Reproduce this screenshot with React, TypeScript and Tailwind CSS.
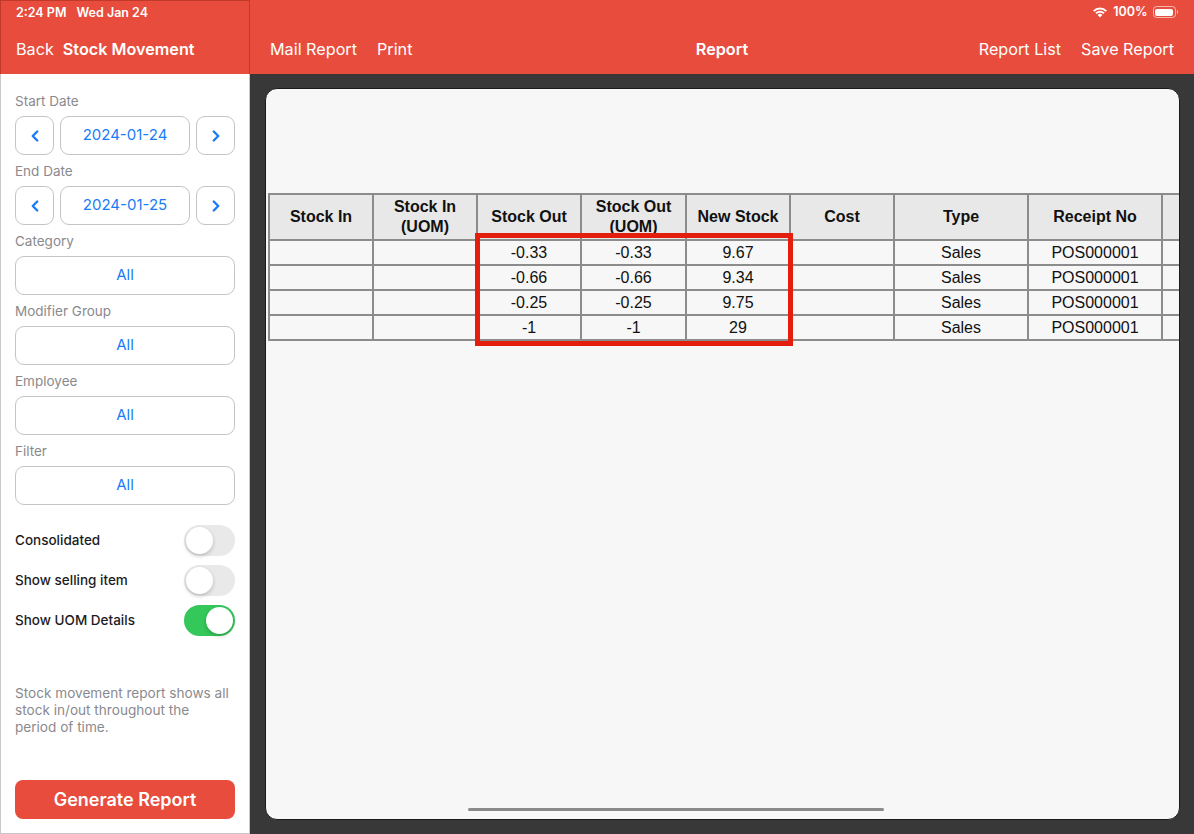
import React from 'react'
import { ChevronLeft, ChevronRight } from 'lucide-react'

const ui = { fontFamily: 'Inter, "Noto Sans", sans-serif' }
const tbl = { fontFamily: '"Liberation Sans", Arial, sans-serif' }

const rows = [
  { out: '-0.33', outUom: '-0.33', stock: '9.67' },
  { out: '-0.66', outUom: '-0.66', stock: '9.34' },
  { out: '-0.25', outUom: '-0.25', stock: '9.75' },
  { out: '-1', outUom: '-1', stock: '29' },
]

const headers: React.ReactNode[] = [
  'Stock In',
  <>Stock In<br />(UOM)</>,
  'Stock Out',
  <>Stock Out<br />(UOM)</>,
  'New Stock',
  'Cost',
  'Type',
  'Receipt No',
  '',
]

function Toggle({ on }: { on?: boolean }) {
  return (
    <div
      className={`w-[51px] h-[31px] rounded-full p-[2px] flex ${
        on ? 'bg-[#34c759] justify-end' : 'bg-[#e9e9ea] justify-start'
      }`}
    >
      <div className="w-[27px] h-[27px] rounded-full bg-white shadow-[0_2px_4px_rgba(0,0,0,0.2)]" />
    </div>
  )
}

function SelectBox({ label, value }: { label: string; value: string }) {
  return (
    <div className="flex flex-col">
      <span className="text-[13.5px] text-[#8a8a8e] leading-[17px] mb-[6px]">{label}</span>
      <div className="h-[39px] rounded-[9px] border border-[#c4c4c6] flex items-center justify-center text-[15px] text-[#1a7cf5]">
        {value}
      </div>
    </div>
  )
}

function DateRow({ label, value }: { label: string; value: string }) {
  return (
    <div className="flex flex-col">
      <span className="text-[13.5px] text-[#8a8a8e] leading-[17px] mb-[6px]">{label}</span>
      <div className="flex gap-[6px] h-[39px]">
        <div className="w-[39px] rounded-[9px] border border-[#c4c4c6] flex items-center justify-center">
          <ChevronLeft className="w-[18px] h-[18px] text-[#1a7cf5]" strokeWidth={3.2} />
        </div>
        <div className="flex-1 rounded-[9px] border border-[#c4c4c6] flex items-center justify-center text-[15px] text-[#1a7cf5]">
          {value}
        </div>
        <div className="w-[39px] rounded-[9px] border border-[#c4c4c6] flex items-center justify-center">
          <ChevronRight className="w-[18px] h-[18px] text-[#1a7cf5]" strokeWidth={3.2} />
        </div>
      </div>
    </div>
  )
}

function Wifi() {
  return (
    <svg width="16" height="12" viewBox="0 0 16 12">
      <path d="M8 11.5 L5.6 9 A3.4 3.4 0 0 1 10.4 9 Z" fill="white" />
      <path d="M3.3 6.7 A6.6 6.6 0 0 1 12.7 6.7 L11.3 8.1 A4.6 4.6 0 0 0 4.7 8.1 Z" fill="white" />
      <path d="M1 4.4 A9.8 9.8 0 0 1 15 4.4 L13.6 5.8 A7.8 7.8 0 0 0 2.4 5.8 Z" fill="white" />
    </svg>
  )
}

function Battery() {
  return (
    <div className="flex items-center">
      <div className="w-[23px] h-[12px] rounded-[3.5px] border border-white/60 p-[1.5px]">
        <div className="w-full h-full rounded-[2px] bg-white" />
      </div>
      <div className="w-[1.5px] h-[4px] rounded-r-sm bg-white/60 ml-[1px]" />
    </div>
  )
}

export default function App() {
  return (
    <div className="w-[1194px] h-[834px] flex overflow-hidden bg-[#383838]" style={ui}>
      {/* 사이드바 */}
      <aside className="w-[250px] h-full flex flex-col shrink-0">
        <div className="h-[74px] bg-[#e74c3c] border-t border-l border-r border-[#c0392b] text-white flex flex-col">
          <div className="h-[24px] flex items-center pl-[15px] gap-[10px] text-[12.5px] font-semibold">
            <span>2:24 PM</span>
            <span>Wed Jan 24</span>
          </div>
          <div className="flex-1 flex items-center pl-[15px] gap-[9px] text-[16.2px]">
            <span>Back</span>
            <span className="font-semibold">Stock Movement</span>
          </div>
        </div>
        <div className="flex-1 bg-white border-l border-r border-b border-[#c8c8c8] px-[14px] pt-[19px] pb-[14px] flex flex-col">
          <div className="flex flex-col gap-[8px]">
            <DateRow label="Start Date" value="2024-01-24" />
            <DateRow label="End Date" value="2024-01-25" />
            <SelectBox label="Category" value="All" />
            <SelectBox label="Modifier Group" value="All" />
            <SelectBox label="Employee" value="All" />
            <SelectBox label="Filter" value="All" />
          </div>
          <div className="flex flex-col gap-[9px] mt-[20px]">
            {[
              ['Consolidated', false],
              ['Show selling item', false],
              ['Show UOM Details', true],
            ].map(([label, on]) => (
              <div key={label as string} className="flex items-center justify-between">
                <span className="text-[13.5px] font-medium text-[#1c1c1e]">{label}</span>
                <Toggle on={on as boolean} />
              </div>
            ))}
          </div>
          <p className="mt-[49px] pr-[4px] text-[13.6px] leading-[17px] text-[#8a8a8e]">
            Stock movement report shows all stock in/out throughout the period of time.
          </p>
          <div className="mt-auto h-[39px] rounded-[8px] bg-[#e74c3c] flex items-center justify-center text-white text-[18px] font-semibold">
            Generate Report
          </div>
        </div>
      </aside>

      {/* 메인 */}
      <main className="flex-1 min-w-0 flex flex-col">
        <header className="h-[74px] bg-[#e74c3c] text-white flex flex-col">
          <div className="h-[24px] flex items-center justify-end pr-[16px] gap-[5px] text-[12.5px] font-semibold">
            <Wifi />
            <span>100%</span>
            <Battery />
          </div>
          <div className="flex-1 grid grid-cols-3 items-center px-[20px] text-[16.2px]">
            <div className="flex gap-[20px]">
              <span>Mail Report</span>
              <span>Print</span>
            </div>
            <div className="text-center font-semibold">Report</div>
            <div className="flex gap-[20px] justify-end">
              <span>Report List</span>
              <span>Save Report</span>
            </div>
          </div>
        </header>

        <div className="flex-1 min-w-0 pl-[15px] pr-[14px] pt-[14px] pb-[14px]">
          <div className="relative h-full min-w-0 rounded-[12px] bg-[#f7f7f7] border border-[#1a1a1a] overflow-hidden pl-[2px] pt-[104px]" style={tbl}>
            {/* 리포트 표 */}
            <div className="w-max grid grid-cols-[102px_102px_102px_103px_102px_102px_132px_132px_60px] grid-rows-[44px_23px_23px_23px_23px] gap-[2px] p-[2px] bg-[#8c8c8c] text-[#111]">
              {headers.map((h, i) => (
                <div
                  key={i}
                  className="bg-[#e8e8e8] flex items-center justify-center text-center text-[16px] font-bold leading-[20px]"
                >
                  <span>{h}</span>
                </div>
              ))}
              {rows.map((r, i) => (
                <React.Fragment key={i}>
                  <div className="bg-[#f7f7f7]" />
                  <div className="bg-[#f7f7f7]" />
                  <div className="bg-[#f7f7f7] flex items-center justify-center text-[16px]">{r.out}</div>
                  <div className="bg-[#f7f7f7] flex items-center justify-center text-[16px]">{r.outUom}</div>
                  <div className="bg-[#f7f7f7] flex items-center justify-center text-[16px]">{r.stock}</div>
                  <div className="bg-[#f7f7f7]" />
                  <div className="bg-[#f7f7f7] flex items-center justify-center text-[16px]">Sales</div>
                  <div className="bg-[#f7f7f7] flex items-center justify-center text-[16px]">POS000001</div>
                  <div className="bg-[#f7f7f7]" />
                </React.Fragment>
              ))}
            </div>

            {/* 강조 표시 */}
            <div className="absolute left-[209px] top-[144px] w-[318px] h-[113px] border-[5px] border-[#e41e0c]" />

            {/* 스크롤 인디케이터 */}
            <div className="absolute left-[202px] bottom-[8px] w-[416px] h-[3px] rounded-full bg-[#8a8a8a]" />
          </div>
        </div>
      </main>
    </div>
  )
}
